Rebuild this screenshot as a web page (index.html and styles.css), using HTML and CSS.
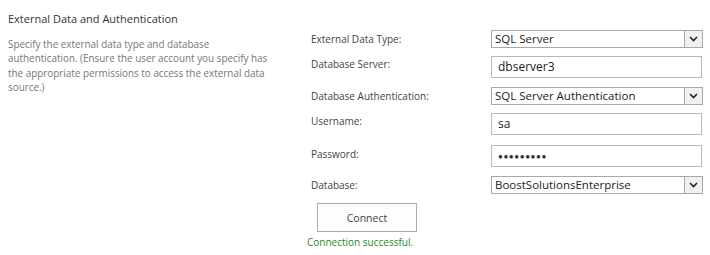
FILE: index.html
```html
<!DOCTYPE html>
<html lang="en">
<head>
  <meta charset="UTF-8">
  <title>External Data and Authentication</title>
  <link rel="stylesheet" href="styles.css">
</head>
<body>

<div class="section">
  <div class="intro">
    <h3 class="title">External Data and Authentication</h3>
    <p class="desc">Specify the external data type and database authentication. (Ensure the user account you specify has the appropriate permissions to access the external data source.)</p>
  </div>

  <div class="fields">
    <div class="row r1">
      <label class="lbl">External Data Type:</label>
      <div class="select">
        <span class="value">SQL Server</span>
        <span class="arrow"><svg width="9" height="6" viewBox="0 0 9 6"><path d="M1 1 L4.5 4.5 L8 1" fill="none" stroke="#222" stroke-width="1.6"/></svg></span>
      </div>
    </div>
    <div class="row r2">
      <label class="lbl">Database Server:</label>
      <div class="input">dbserver3</div>
    </div>
    <div class="row r3">
      <label class="lbl">Database Authentication:</label>
      <div class="select">
        <span class="value">SQL Server Authentication</span>
        <span class="arrow"><svg width="9" height="6" viewBox="0 0 9 6"><path d="M1 1 L4.5 4.5 L8 1" fill="none" stroke="#222" stroke-width="1.6"/></svg></span>
      </div>
    </div>
    <div class="row r4">
      <label class="lbl">Username:</label>
      <div class="input">sa</div>
    </div>
    <div class="row r5">
      <label class="lbl">Password:</label>
      <div class="input pwd">●●●●●●●●●</div>
    </div>
    <div class="row r6">
      <label class="lbl">Database:</label>
      <div class="select">
        <span class="value">BoostSolutionsEnterprise</span>
        <span class="arrow"><svg width="9" height="6" viewBox="0 0 9 6"><path d="M1 1 L4.5 4.5 L8 1" fill="none" stroke="#222" stroke-width="1.6"/></svg></span>
      </div>
    </div>
    <div class="actions">
      <button class="connect-btn">Connect</button>
      <div class="status">Connection successful.</div>
    </div>
  </div>
</div>

</body>
</html>
```

FILE: styles.css
```css
* { box-sizing: border-box; }
body {
  margin: 0; padding: 0;
  background: #fff;
  font-family: "Open Sans", "Noto Sans", sans-serif;
  color: #444;
}
.section {
  display: flex;
  padding-top: 10px;
}
.intro {
  width: 307px;
  padding-left: 8px;
}
.title {
  margin: 0;
  font-size: 11px;
  font-weight: normal;
  color: #333;
  line-height: 17px;
}
.desc {
  width: 265px;
  margin: 10px 0 0;
  font-size: 9.9px;
  line-height: 14.4px;
  color: #777;
}
.fields {
  width: 396px;
  padding-top: 20px;
}
.row {
  display: flex;
  align-items: flex-start;
}
.lbl {
  width: 184px;
  padding-left: 4px;
  font-size: 10px;
  line-height: 17px;
  color: #444;
  padding-top: 1px;
}
.r2, .r4 { margin-top: 8px; }
.r3, .r6 { margin-top: 9px; }
.r5 { margin-top: 10px; }
.r2 .lbl, .r4 .lbl { padding-top: 0; }

.select {
  flex: 1;
  height: 18px;
  display: flex;
  border: 1px solid #a8a8a8;
  background: #fff;
  font-size: 11.5px;
}
.select .value {
  flex: 1;
  padding-left: 3px;
  line-height: 16px;
  color: #222;
}
.select .arrow {
  width: 18px;
  height: 16px;
  border-left: 1px solid #a8a8a8;
  background: #f0f0f0;
  display: flex;
  align-items: center;
  justify-content: center;
}
.input {
  flex: 1;
  margin-right: 1px;
  height: 22px;
  border: 1px solid #b8b8b8;
  padding-left: 6px;
  font-size: 12px;
  line-height: 20px;
  color: #222;
}
.pwd {
  font-size: 8px;
  letter-spacing: 0.6px;
  color: #333;
}
.actions {
  margin-top: 9px;
}
.connect-btn {
  display: block;
  margin-left: 10px;
  width: 100px;
  height: 29px;
  border: 1px solid #ababab;
  background: #fdfdfd;
  font-family: inherit;
  font-size: 10.5px;
  color: #444;
}
.status {
  margin-top: 2px;
  font-size: 10px;
  line-height: 17px;
  color: #1e8a1e;
}
```
